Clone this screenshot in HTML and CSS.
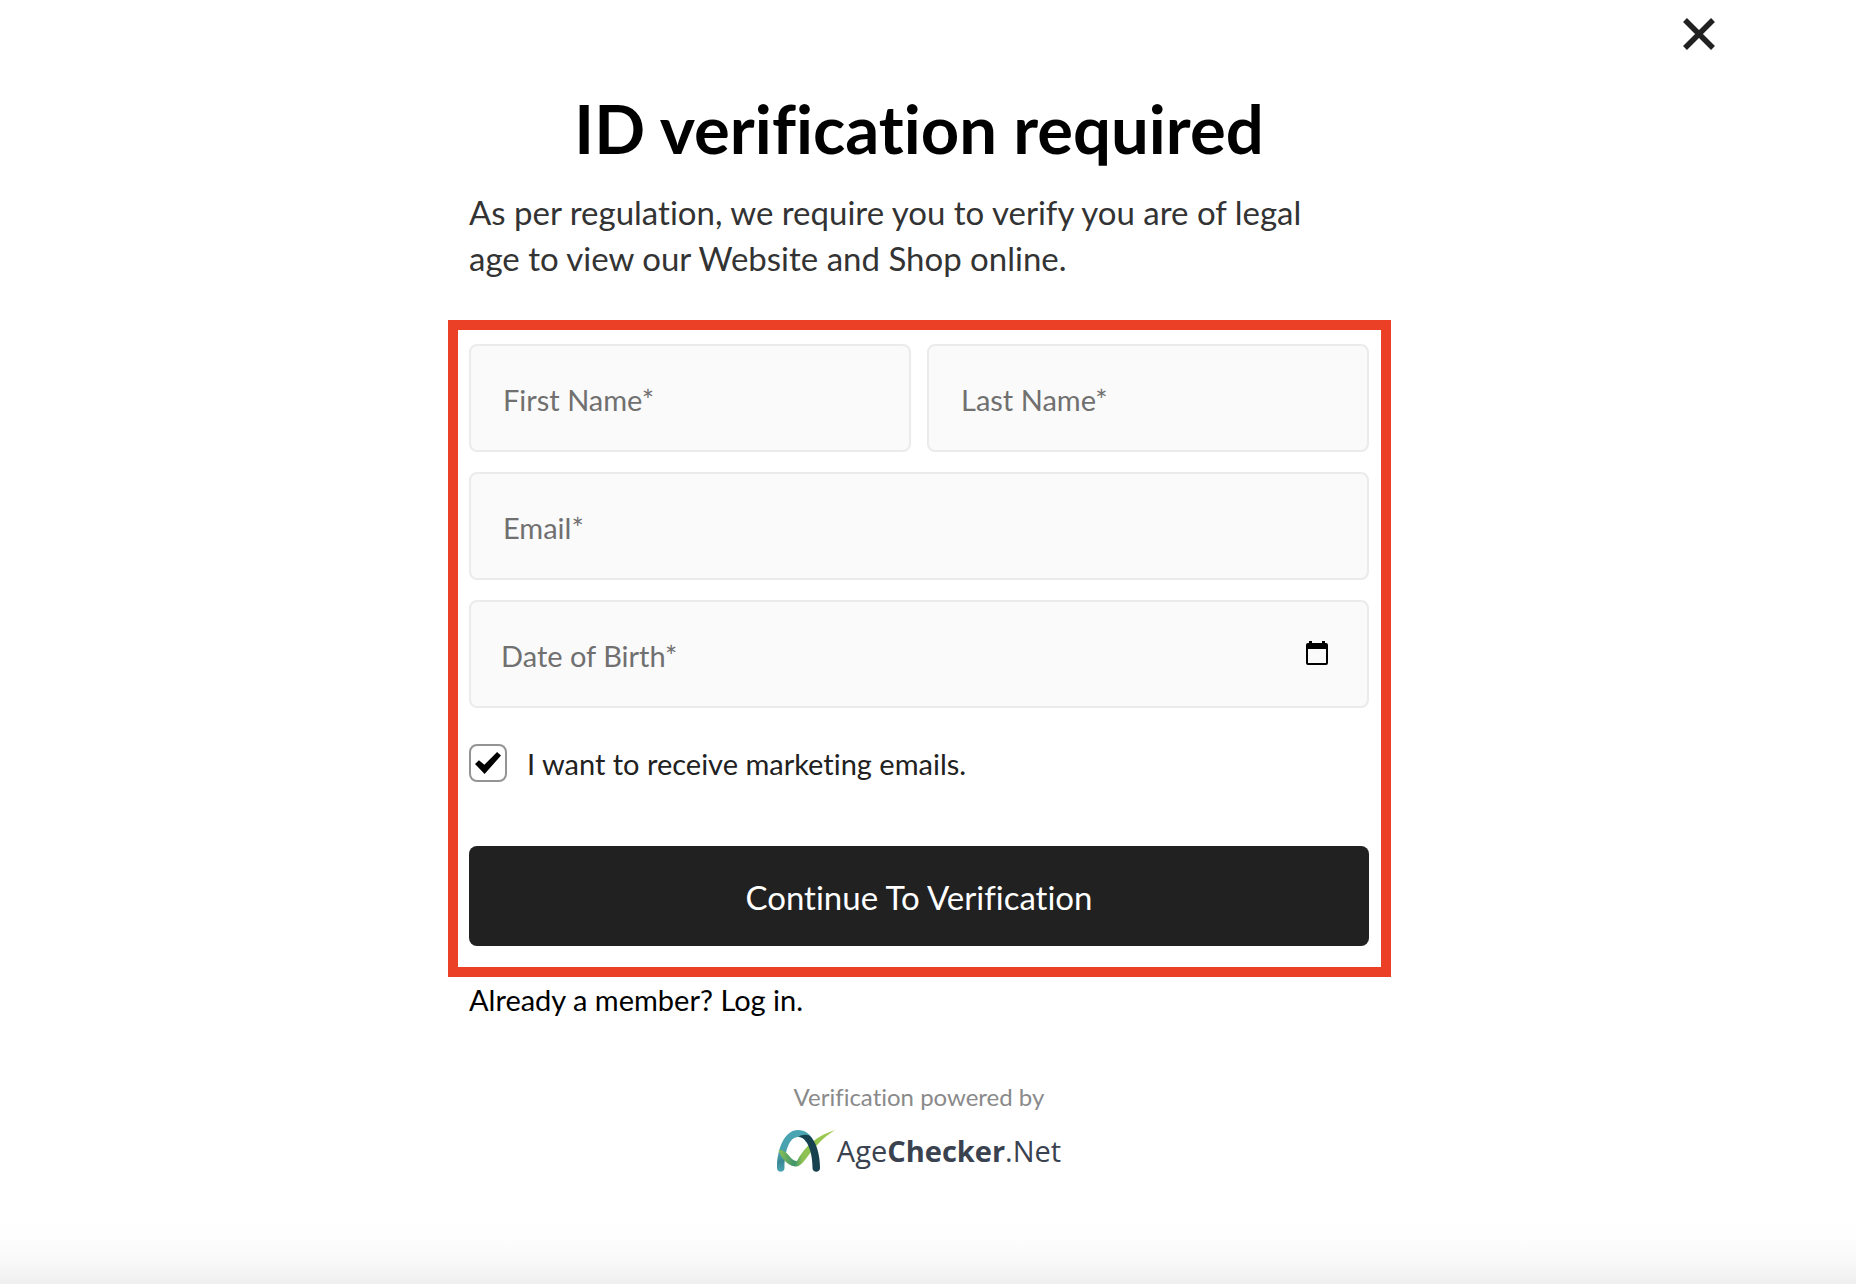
FILE: index.html
```html
<!DOCTYPE html>
<html lang="en">
<head>
<meta charset="utf-8">
<meta name="viewport" content="width=device-width, initial-scale=1">
<title>ID verification required</title>
<link rel="stylesheet" href="styles.css">
</head>
<body>
<div class="page">
  <header class="topbar">
    <button class="close" type="button" aria-label="Close">
      <svg viewBox="0 0 32 32" width="32" height="32" aria-hidden="true"><path d="M2 2 30 30M30 2 2 30" stroke="#212121" stroke-width="5.500" fill="none"/></svg>
    </button>
  </header>
  <main class="dialog">
    <h1 class="title">ID verification required</h1>
    <p class="intro">As per regulation, we require you to verify you are of legal age to view our Website and Shop online.</p>
    <form class="form">
      <div class="name-row">
        <input class="field" type="text" placeholder="First Name*" aria-label="First Name">
        <input class="field" type="text" placeholder="Last Name*" aria-label="Last Name">
      </div>
      <input class="field" type="email" placeholder="Email*" aria-label="Email">
      <div class="date-field">
        <input class="field date-input" type="date" id="dob">
        <label class="date-label" for="dob">Date of Birth*</label>
        <svg class="date-icon" viewBox="0 0 22 24" width="22" height="24" aria-hidden="true"><path fill-rule="evenodd" d="M3 0h3v2h10V0h3v2h1a2 2 0 0 1 2 2v18a2 2 0 0 1-2 2H2a2 2 0 0 1-2-2V4a2 2 0 0 1 2-2h1zM2 8v14h18V8z"/></svg>
      </div>
      <label class="consent">
        <input class="checkbox" type="checkbox" checked>
        <span class="consent-text">I want to receive marketing emails.</span>
      </label>
      <button class="submit" type="submit">Continue To Verification</button>
    </form>
    <p class="login">Already a member? <a class="login-link" href="#login">Log in.</a></p>
    <footer class="powered">
      <span class="powered-text">Verification powered by</span>
      <a class="brand" href="#agechecker">
        <svg viewBox="0 0 58 42" width="58" height="42" aria-hidden="true">
          <defs>
            <linearGradient id="left" x1="0" y1="0" x2="0" y2="1"><stop offset="0" stop-color="#4aa5b3"/><stop offset=".6" stop-color="#4a9fac"/><stop offset=".75" stop-color="#3a8794"/><stop offset="1" stop-color="#4aa5b3"/></linearGradient>
            <linearGradient id="check" x1="0" y1="0" x2="1" y2="0"><stop offset="0" stop-color="#8cc152"/><stop offset=".28" stop-color="#3f946d"/><stop offset=".42" stop-color="#8dc153"/><stop offset="1" stop-color="#a0cb4b"/></linearGradient>
          </defs>
          <path d="M0 38C0 18 8 0 21 0 28 0 33 4 36 10L29 12C27 8.500 25 7 21 7 12 7 7.500 22 7.500 38 7.500 43 0 43 0 38z" fill="url(#left)"/>
          <path d="M1.500 20C5 19.500 8 21 11 24.500 14 28 16 31 20 31 26 20 36 7 58 0 45 8 36 19 28 30 24 35 21 37 18 36.500 9 35 4 27 1.500 20z" fill="url(#check)"/>
          <path d="M21.500 7C24 4.500 29 4 32.500 5.500 39 11 43 24 43 38 43 43 35.500 43 35.500 38 35.500 27 33 17 29 11.500 27 8.500 25 7 21.500 7z" fill="#17414f"/>
        </svg>
        <span class="brand-name">Age<b>Checker</b>.Net</span>
      </a>
    </footer>
  </main>
</div>
</body>
</html>
```
FILE: styles.css
```css
* {
  box-sizing: border-box;
}

body {
  margin: 0;
  background: #fff;
  color: #000;
  font-family: Lato, "Liberation Sans", sans-serif;
  font-variant-ligatures: no-common-ligatures;
}

.page {
  min-height: 100vh;
  padding-right: 18px;
  background: linear-gradient(to top, #efefef 0, #f8f8f8 22px, #fdfdfd 44px, #fff 64px);
}

.topbar {
  display: flex;
  justify-content: flex-end;
  padding: 18px 123px 0 0;
}

.close {
  display: block;
  padding: 0;
  border: 0;
  background: none;
  line-height: 0;
  cursor: pointer;
}

.dialog {
  width: 100%;
  max-width: 900px;
  margin: 0 auto;
}

.title {
  margin: 38px 0 21px;
  font-size: 67px;
  font-weight: 700;
  line-height: 80px;
  text-align: center;
}

.intro {
  margin: 0 0 39px;
  padding-right: 32px;
  color: #333;
  font-size: 33px;
  line-height: 46px;
}

.form {
  display: flex;
  flex-direction: column;
  gap: 20px;
  margin: 0 -22px 0 -21px;
  padding: 14px 12px 21px 11px;
  border: 10px solid #eb4026;
}

.name-row {
  display: grid;
  grid-template-columns: 1fr 1fr;
  gap: 16px;
}

.field {
  width: 100%;
  min-width: 0;
  height: 108px;
  padding: 2px 32px 0;
  border: 2px solid #ebebeb;
  border-radius: 8px;
  background: #fafafa;
  color: #212121;
  font-family: inherit;
  font-size: 29px;
}

.field::placeholder {
  color: #707070;
  opacity: 1;
}

.date-field {
  display: grid;
  align-items: center;
}

.date-field > * {
  grid-area: 1 / 1;
}

.date-input::-webkit-datetime-edit {
  color: transparent;
}

.date-input::-webkit-calendar-picker-indicator {
  opacity: 0;
}

.date-label {
  justify-self: start;
  padding: 2px 0 0 32px;
  color: #707070;
  font-size: 29px;
  pointer-events: none;
}

.date-icon {
  justify-self: end;
  margin: 0 41px 2px 0;
  pointer-events: none;
}

.consent {
  display: flex;
  align-items: center;
  gap: 20px;
  margin-top: 16px;
  color: #212121;
  font-size: 29px;
  line-height: 36px;
}

.consent-text {
  padding-top: 2px;
}

.checkbox {
  display: grid;
  place-items: center;
  width: 38px;
  height: 38px;
  margin: 0;
  border: 2px solid #949494;
  border-radius: 8px;
  background: #fff;
  appearance: none;
}

.checkbox:checked::before {
  content: "";
  width: 26px;
  height: 22px;
  background: #000;
  clip-path: polygon(0 55%, 15% 37%, 36% 58%, 85% 0, 100% 16%, 37% 100%);
}

.submit {
  height: 100px;
  margin-top: 44px;
  padding: 2px 0 0;
  border: 0;
  border-radius: 8px;
  background: #212121;
  color: #fff;
  font-family: inherit;
  font-size: 33px;
  font-variant-ligatures: inherit;
  cursor: pointer;
}

.login {
  margin: 4px 0 0;
  font-size: 29px;
  line-height: 38px;
}

.login-link {
  color: inherit;
  text-decoration: none;
}

.powered {
  display: flex;
  flex-direction: column;
  align-items: center;
  gap: 17px;
  margin-top: 62px;
}

.powered-text {
  color: #8a8a8a;
  font-size: 24px;
  line-height: 32px;
}

.brand {
  display: flex;
  align-items: center;
  gap: 2px;
  color: #3a4250;
  text-decoration: none;
}

.brand-name {
  font-family: "Open Sans", "Noto Sans", sans-serif;
  font-size: 29px;
  line-height: 42px;
}
```
